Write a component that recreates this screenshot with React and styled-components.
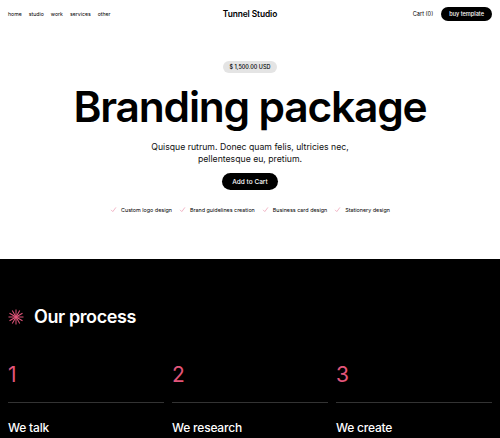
import React from "react"
import styled, { createGlobalStyle } from "styled-components"

const GlobalStyle = createGlobalStyle`
  * { box-sizing: border-box; }
  body {
    margin: 0;
    background: #fff;
    font-family: Inter, "Liberation Sans", sans-serif;
    color: #000;
  }
`

const Nav = styled.header`
  display: grid;
  grid-template-columns: 1fr auto 1fr;
  align-items: center;
  height: 28px;
  padding: 0 8px;
`

const Links = styled.nav`
  display: flex;
  gap: 7px;
  font-size: 5.2px;
`

const Brand = styled.div`
  font-size: 8.4px;
  font-weight: 600;
  letter-spacing: -0.1px;
`

const Right = styled.div`
  display: flex;
  justify-content: flex-end;
  align-items: center;
  gap: 8px;
  font-size: 5.6px;
`

const PillButton = styled.button`
  border: 0;
  background: #000;
  color: #fff;
  font-family: inherit;
  font-size: ${(p) => p.size || 5.6}px;
  font-weight: 500;
  height: ${(p) => p.h || 14}px;
  padding: 0 ${(p) => p.px || 8}px;
  border-radius: 999px;
  margin-top: ${(p) => p.mt || 0}px;
`

const Hero = styled.section`
  display: flex;
  flex-direction: column;
  align-items: center;
  padding-top: 33px;
  height: 231px;
`

const Price = styled.div`
  background: #e4e4e4;
  border-radius: 999px;
  font-size: 5.5px;
  font-weight: 500;
  height: 12px;
  padding: 0 7px;
  display: flex;
  align-items: center;
`

const Title = styled.h1`
  margin: 9px 0 0;
  font-size: 42.5px;
  font-weight: 600;
  letter-spacing: -1.2px;
  line-height: 50px;
`

const Sub = styled.p`
  margin: 9px 0 0;
  font-size: 8.7px;
  line-height: 12px;
  text-align: center;
  color: #111;
`

const Features = styled.ul`
  list-style: none;
  margin: 16px 0 0;
  padding: 0;
  display: flex;
  gap: 7px;
  font-size: 5.4px;
`

const Feature = styled.li`
  display: flex;
  align-items: center;
  gap: 4px;
`

const Dark = styled.section`
  background: #000;
  color: #fff;
  padding: 47px 8px 0;
  height: 179px;
  overflow: hidden;
`

const Heading = styled.h2`
  display: flex;
  align-items: center;
  gap: 10px;
  margin: 0;
  font-size: 18px;
  font-weight: 600;
  letter-spacing: -0.4px;
`

const Steps = styled.div`
  display: grid;
  grid-template-columns: repeat(3, 1fr);
  gap: 8px;
  margin-top: 35px;
`

const Step = styled.div`
  display: flex;
  flex-direction: column;
`

const Num = styled.div`
  color: #e2557a;
  font-size: 21px;
  font-weight: 400;
  line-height: 26px;
  padding-bottom: 14px;
  border-bottom: 1px solid #333;
`

const StepTitle = styled.div`
  margin-top: 17px;
  font-size: 12px;
  font-weight: 500;
  letter-spacing: -0.2px;
`

const Check = () => (
  <svg width="7" height="7" viewBox="0 0 10 10" fill="none">
    <path d="M1.5 5.5 L4 8 L8.5 2" stroke="#f0a9bc" strokeWidth="1.2" />
  </svg>
)

const Star = () => (
  <svg width="16" height="16" viewBox="0 0 16 16" stroke="#e2557a" strokeWidth="1">
    {[0, 30, 60, 90, 120, 150].map((a) => (
      <line key={a} x1="8" y1="0.5" x2="8" y2="15.5" transform={`rotate(${a} 8 8)`} />
    ))}
  </svg>
)

const features = ["Custom logo design", "Brand guidelines creation", "Business card design", "Stationery design"]
const steps = ["We talk", "We research", "We create"]

export default function App() {
  return (
    <>
      <GlobalStyle />
      <Nav>
        <Links>
          <span>home</span>
          <span>studio</span>
          <span>work</span>
          <span>services</span>
          <span>other</span>
        </Links>
        <Brand>Tunnel Studio</Brand>
        <Right>
          <span>Cart (0)</span>
          <PillButton>buy template</PillButton>
        </Right>
      </Nav>
      <Hero>
        <Price>$ 1,500.00 USD</Price>
        <Title>Branding package</Title>
        <Sub>
          Quisque rutrum. Donec quam felis, ultricies nec,
          <br />
          pellentesque eu, pretium.
        </Sub>
        <PillButton size={6.5} h={17} px={10} mt={8}>
          Add to Cart
        </PillButton>
        <Features>
          {features.map((f) => (
            <Feature key={f}>
              <Check />
              {f}
            </Feature>
          ))}
        </Features>
      </Hero>
      <Dark>
        <Heading>
          <Star />
          Our process
        </Heading>
        <Steps>
          {steps.map((s, i) => (
            <Step key={s}>
              <Num>{i + 1}</Num>
              <StepTitle>{s}</StepTitle>
            </Step>
          ))}
        </Steps>
      </Dark>
    </>
  )
}
